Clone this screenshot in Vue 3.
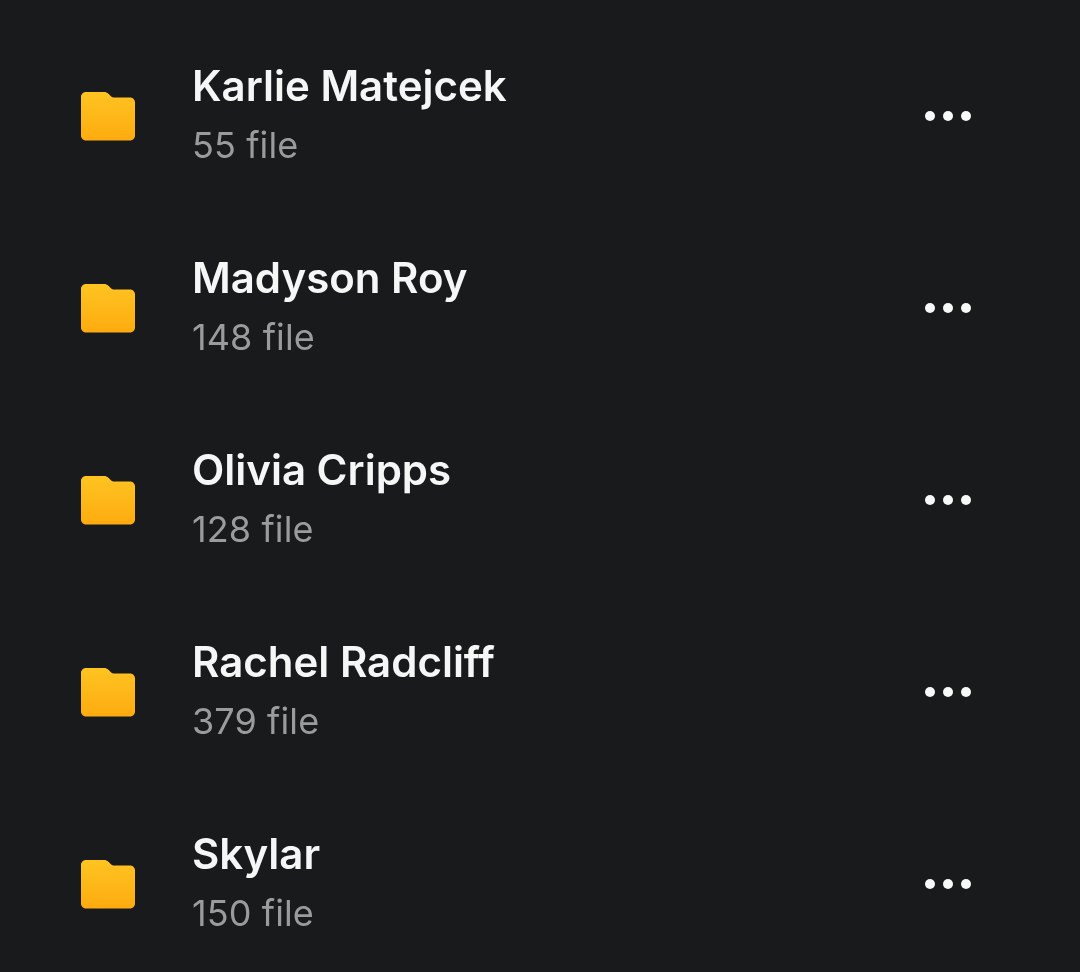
<script setup>
const rows = [
  { name: 'Karlie Matejcek', count: '55 file' },
  { name: 'Madyson Roy', count: '148 file' },
  { name: 'Olivia Cripps', count: '128 file' },
  { name: 'Rachel Radcliff', count: '379 file' },
  { name: 'Skylar', count: '150 file' },
]
</script>

<template>
  <div class="page">
    <div v-for="(row, i) in rows" :key="row.name" class="row">
      <svg class="folder" width="54" height="50" viewBox="0 0 54 50">
        <defs>
          <linearGradient :id="'g' + i" x1="0" y1="0" x2="0" y2="1">
            <stop offset="0" stop-color="#ffc422" />
            <stop offset="1" stop-color="#fdab0f" />
          </linearGradient>
        </defs>
        <path
          d="M5 0H23C25 0 26 .6 27.4 1.8L30 4.2C31 5.2 32 5.6 33.500 5.600H49C51.800 5.600 54 7.800 54 10.600V43.500C54 46.300 51.800 48.500 49 48.500H5C2.200 48.500 0 46.300 0 43.500V5C0 2.200 2.200 0 5 0Z"
          :fill="'url(#g' + i + ')'"
        />
      </svg>
      <div class="text">
        <div class="name">{{ row.name }}</div>
        <div class="count">{{ row.count }}</div>
      </div>
      <div class="dots"><span></span><span></span><span></span></div>
    </div>
  </div>
</template>

<style>
html, body { margin: 0; background: #191a1c; }
</style>

<style scoped>
.page {
  width: 1080px;
  height: 972px;
  box-sizing: border-box;
  padding-top: 20px;
  background: #191a1c;
  font-family: Inter, "Noto Sans", sans-serif;
  overflow: hidden;
}
.row {
  display: flex;
  align-items: center;
  height: 192px;
  padding-left: 81px;
  padding-right: 109px;
  box-sizing: border-box;
}
.folder { flex: none; margin-top: 1px; }
.text {
  flex: 1;
  margin-left: 58px;
  padding-bottom: 3px;
  display: flex;
  flex-direction: column;
  gap: 14px;
  will-change: transform;
}
.name {
  font-size: 42px;
  line-height: 46px;
  font-weight: 600;
  color: #f5f6f6;
  margin-left: -1px;
}
.count {
  font-size: 36px;
  line-height: 44px;
  font-weight: 400;
  letter-spacing: 0.1px;
  color: #9a9b9c;
  margin-left: -1px;
}
.dots { display: flex; gap: 8px; }
.dots span {
  width: 10px;
  height: 10px;
  border-radius: 50%;
  background: #f7f8f8;
}
</style>
